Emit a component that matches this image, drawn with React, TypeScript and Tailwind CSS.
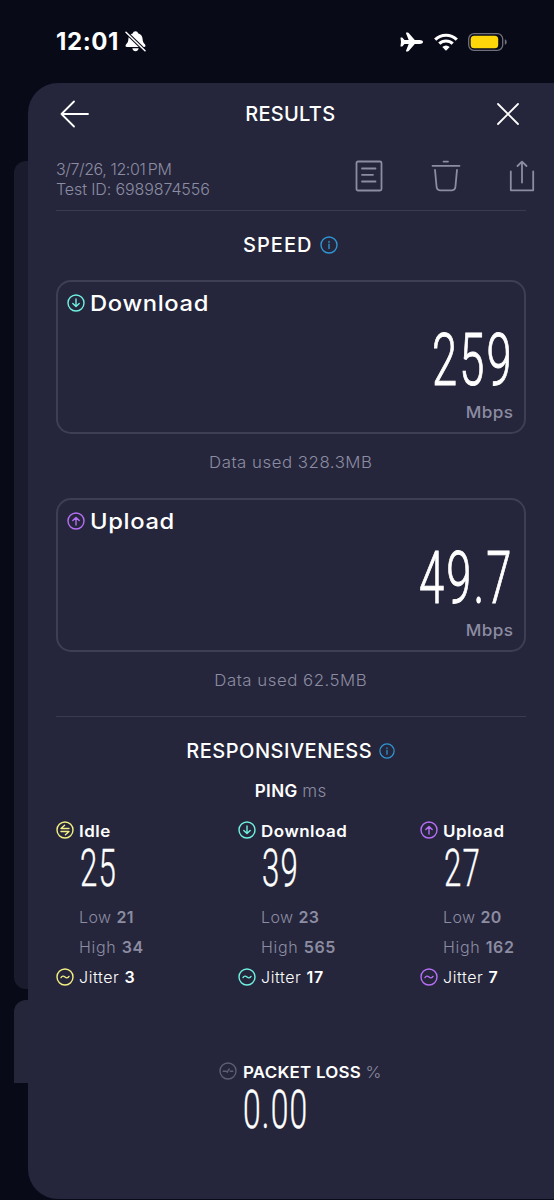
import React from 'react';

interface PingColumn {
  label: string;
  kind: IconKind;
  color: string;
  value: string;
  low: string;
  high: string;
  jitter: string;
}

type IconKind = 'idle' | 'down' | 'up' | 'jitter' | 'loss' | 'info';

const YELLOW = '#f3ef83';
const TEAL = '#6ff0e0';
const PURPLE = '#b66ff5';

const PING: PingColumn[] = [
  { label: 'Idle', kind: 'idle', color: YELLOW, value: '25', low: '21', high: '34', jitter: '3' },
  { label: 'Download', kind: 'down', color: TEAL, value: '39', low: '23', high: '565', jitter: '17' },
  { label: 'Upload', kind: 'up', color: PURPLE, value: '27', low: '20', high: '162', jitter: '7' },
];

const GLYPHS: Record<IconKind, string> = {
  idle: 'M13 7.500H5L8.600 4.200M5 10.500h8L9.400 13.800',
  down: 'M9 5v7.400M5.800 9.400L9 12.600l3.200-3.200',
  up: 'M9 13V5.600M5.800 8.600L9 5.400l3.200 3.200',
  jitter: 'M5 9.600C6.200 7.600 7.600 7.800 9 9s2.800 1.400 4-.6',
  loss: 'M4.200 9.200h2.600l1.600 1M8.200 9.800l2-2.800M11.200 9.200h2.600',
  info: 'M9 8.200v4.400M9 5.400v.8',
};

function CircleIcon({ kind, color, size = 18 }: { kind: IconKind; color: string; size?: number }) {
  return (
    <svg width={size} height={size} viewBox="0 0 18 18" fill="none" stroke={color} strokeWidth="1.4" strokeLinecap="round" strokeLinejoin="round" className="shrink-0">
      <circle cx="9" cy="9" r="8" />
      <path d={GLYPHS[kind]} />
    </svg>
  );
}

function StatusBar() {
  return (
    <div className="flex h-[83px] items-center justify-between pr-[46px] pl-[56px] text-white">
      <div className="flex items-center gap-[6px]">
        <span className="text-2xl leading-6 font-bold tracking-[0.6px]">12:01</span>
        <svg width="21" height="21" viewBox="0 0 21 21" fill="none">
          <path d="M10.5 0.3c1.400 0 2.400.8 2.600 1.900 3 1 4.400 3.200 4.500 5.900.1 2.800.9 3.900 2.400 5.400.9 1 .5 2.600-.9 2.600H1.900c-1.400 0-1.800-1.600-.9-2.600 1.500-1.500 2.300-2.600 2.400-5.400.1-2.700 1.500-4.900 4.500-5.900.2-1.100 1.200-1.900 2.600-1.900z" fill="#fff" />
          <path d="M7.300 17.300h6.400c-.4 1.800-1.600 2.900-3.200 2.900s-2.800-1.100-3.200-2.900z" fill="#fff" />
          <path d="M0.500 0.700l20 19.500" stroke="#080a18" strokeWidth="3.500" />
          <path d="M1 1.200l19 18.500" stroke="#fff" strokeWidth="1.500" strokeLinecap="round" />
        </svg>
      </div>
      <div className="flex items-center gap-[10px]">
        <svg width="24" height="20" viewBox="0 0 24 20" fill="#fff">
          <path d="M23 10c0 1.200-1.600 1.900-3.200 1.900h-5L8.900 18.800c-.3.400-.7.600-1.200.6H6.400c-.4 0-.6-.3-.4-.7l2.700-6.800H4.500L2.500 14.300c-.2.200-.4.300-.7.300h-.9c-.3 0-.5-.3-.4-.6L1 10 .5 6c-.1-.3.1-.6.4-.6h.9c.3 0 .5.100.7.300l2 2.400h4.200L6 1.300c-.2-.4 0-.7.400-.7h1.300c.5 0 .9.200 1.200.6l5.900 6.900h5c1.600 0 3.200.7 3.200 1.900z" />
        </svg>
        <svg width="24" height="18" viewBox="0 0 24 18" fill="none" stroke="#fff" strokeWidth="3.100">
          <path d="M1.200 6.600a15.400 15.400 0 0 1 21.600 0" />
          <path d="M5.300 10.700a9.600 9.600 0 0 1 13.400 0" />
          <path d="M12 17.800l-3.700-3.700a5.200 5.200 0 0 1 7.400 0z" fill="#fff" stroke="none" />
        </svg>
        <svg width="40" height="18" viewBox="0 0 40 18" fill="none">
          <rect x="0.700" y="0.700" width="34" height="16.600" rx="5.300" stroke="#6f707b" strokeWidth="1.300" />
          <rect x="2.700" y="2.700" width="27.500" height="12.600" rx="3.500" fill="#ffd60a" />
          <path d="M36.800 6.200c1.400.4 1.900 1.600 1.900 2.800s-.5 2.400-1.900 2.800z" fill="#6f707b" />
        </svg>
      </div>
    </div>
  );
}

function SpeedCard({ label, kind, color, value, used }: { label: string; kind: IconKind; color: string; value: string; used: string }) {
  return (
    <>
      <div className="h-[154px] rounded-[15px] border-2 border-[#3e3e54] px-2.5 pt-2">
        <div className="-ml-[1px] flex h-[26px] items-center gap-[5px]">
          <CircleIcon kind={kind} color={color} />
          <span className="origin-left scale-x-[1.08] text-[22px] font-medium tracking-[0.6px]">{label}</span>
        </div>
        <div className="flex h-[88px] items-center justify-end">
          <span className="origin-right scale-x-[0.62] font-[Roboto] text-[73px] leading-none font-light tracking-[3.4px] [-webkit-text-stroke:1px_white]">{value}</span>
        </div>
        <div className="-mt-[2px] origin-right scale-x-[1.07] text-right text-base leading-5 font-medium tracking-[0.4px] text-[#8c8ca2]">Mbps</div>
      </div>
      <div className="mt-[18px] mb-[26px] scale-x-[1.05] text-center text-base leading-5 font-light tracking-[0.5px] text-[#8c8ca2]">
        {used}
      </div>
    </>
  );
}

export default function App() {
  return (
    <div className="relative h-[1200px] w-[554px] overflow-hidden bg-[#080a18] font-[Inter,sans-serif] text-white">
      {/* cards of the page below the sheet */}
      <div className="absolute top-[161px] left-[14px] h-[828px] w-10 rounded-l-xl bg-[#1a1b2c]" />
      <div className="absolute top-[1000px] left-[14px] h-[83px] w-10 rounded-tl-xl bg-[#25263a]" />

      <StatusBar />

      <main className="relative ml-7 h-[1116px] rounded-l-[30px] bg-[#25263b] pr-[28.5px] pl-7">
        <header className="flex h-[62px] items-center justify-between">
          <svg width="35" height="28" viewBox="0 0 35 28" fill="none" stroke="#fff" strokeWidth="1.800" strokeLinecap="round" strokeLinejoin="round">
            <path d="M18 1.500L5.500 14 18 26.500M5.500 14H32" />
          </svg>
          <h1 className="text-[20px] font-medium tracking-[0.3px]">RESULTS</h1>
          <svg width="36" height="24" viewBox="0 0 36 24" fill="none" stroke="#fff" strokeWidth="1.800" strokeLinecap="round">
            <path d="M8 2l20 20M28 2L8 22" />
          </svg>
        </header>

        <div className="mt-[14px] flex justify-between text-base leading-5 font-light text-[#8c8ca2]">
          <div>
            <div className="tracking-[-0.4px]">3/7/26, 12:01{'\u2009'}PM</div>
            <div className="tracking-[-0.1px]">Test ID: 6989874556</div>
          </div>
          <div className="-mr-[9px] flex gap-[48px] pt-[1px]">
            <svg width="28" height="32" viewBox="0 0 28 32" fill="none" stroke="#8c8ca2" strokeWidth="1.800" strokeLinecap="round">
              <rect x="1.500" y="1.500" width="25" height="29" rx="1.500" />
              <path d="M7 8.500h13.500M7 14.800h11M7 21.500h13.500" />
            </svg>
            <svg width="30" height="32" viewBox="0 0 30 32" fill="none" stroke="#8c8ca2" strokeWidth="1.800" strokeLinecap="round" strokeLinejoin="round">
              <path d="M12.500 1.600h4.500M1.500 5.800h27M4 9.800l1.600 17.200c.2 2 1.400 3.300 3.400 3.300h12c2 0 3.200-1.300 3.400-3.300L26 9.800" />
            </svg>
            <svg width="26" height="32" viewBox="0 0 26 32" fill="none" stroke="#8c8ca2" strokeWidth="1.800" strokeLinecap="round" strokeLinejoin="round">
              <path d="M1.800 11.500v18.800h22.400V11.500M13 22.500V2M8.500 6L13 1.600 17.500 6" />
            </svg>
          </div>
        </div>

        <div className="mt-[11px] h-px bg-[#3b3b50]" />

        <div className="mb-[1px] flex h-[68px] items-center justify-center gap-[8px]">
          <h2 className="text-[20px] font-medium tracking-[1px]">SPEED</h2>
          <CircleIcon kind="info" color="#2f95d3" />
        </div>

        <SpeedCard label="Download" kind="down" color={TEAL} value="259" used="Data used 328.3MB" />
        <SpeedCard label="Upload" kind="up" color={PURPLE} value="49.7" used="Data used 62.5MB" />

        <div className="h-px bg-[#3b3b50]" />

        <div className="mt-[22px] flex h-6 items-center justify-center gap-[7px]">
          <h2 className="text-[20px] font-medium tracking-[0.5px]">RESPONSIVENESS</h2>
          <CircleIcon kind="info" color="#2f95d3" size={16} />
        </div>
        <div className="mt-[18px] text-center text-[17px] leading-5 font-semibold tracking-[0.4px]">
          PING <span className="font-light text-[#8c8ca2]">ms</span>
        </div>

        <div className="mt-[19px] grid grid-cols-[182px_182px_1fr] text-base">
          {PING.map((col) => (
            <div key={col.label}>
              <div className="flex h-5 items-center gap-[5px]">
                <CircleIcon kind={col.kind} color={col.color} />
                <span className="origin-left scale-x-[1.06] pt-px leading-5 font-semibold tracking-[0.5px]">{col.label}</span>
              </div>
              <div className="mb-[5px] flex h-[57px] items-center pt-px pl-[24px]">
                <span className="origin-left scale-x-[0.6] font-[Roboto] text-[52px] leading-none font-light tracking-[2px] [-webkit-text-stroke:0.4px_white]">{col.value}</span>
              </div>
              <div className="pl-[23px] leading-[30px] font-light tracking-[0.4px] text-[#8c8ca2]">
                <div>Low <b className="font-semibold">{col.low}</b></div>
                <div className="tracking-[0.7px]">High <b className="font-semibold">{col.high}</b></div>
              </div>
              <div className="flex h-[30px] items-center gap-[5px]">
                <CircleIcon kind="jitter" color={col.color} />
                <span className="font-light tracking-[0.6px]">Jitter <b className="font-semibold">{col.jitter}</b></span>
              </div>
            </div>
          ))}
        </div>

        <div className="mt-[69px] ml-[163px]">
          <div className="flex h-5 items-center gap-[6px]">
            <CircleIcon kind="loss" color="#5e5e73" />
            <span className="origin-left scale-x-[1.06] pt-px text-base leading-5 font-semibold tracking-[0.2px]">
              PACKET LOSS <span className="font-light text-[#8c8ca2]">%</span>
            </span>
          </div>
          <div className="flex h-[58px] items-center pl-[24px]">
            <span className="origin-left scale-x-[0.6] font-[Roboto] text-[53px] leading-none font-light tracking-[2px] [-webkit-text-stroke:0.4px_white]">0.00</span>
          </div>
        </div>
      </main>
    </div>
  );
}
